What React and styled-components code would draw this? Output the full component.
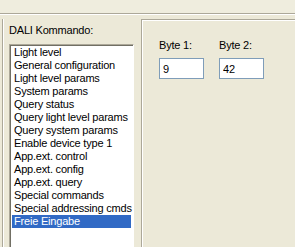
import styled, { createGlobalStyle } from "styled-components";

const GlobalStyle = createGlobalStyle`
  body {
    margin: 0;
    background: #ece9d8;
    font-family: "Liberation Sans", Arial, sans-serif;
    font-size: 11px;
    letter-spacing: -0.2px;
  }
`;

const items = [
  "Light level",
  "General configuration",
  "Light level params",
  "System params",
  "Query status",
  "Query light level params",
  "Query system params",
  "Enable device type 1",
  "App.ext. control",
  "App.ext. config",
  "App.ext. query",
  "Special commands",
  "Special addressing cmds",
  "Freie Eingabe",
];

const App = () => {
  return (
    <Window>
      <GlobalStyle />
      <TopBar />
      <Content>
        <LeftPane>
          <Label>DALI Kommando:</Label>
          <ListBox>
            {items.map((item) => (
              <Item key={item} selected={item === "Freie Eingabe"}>
                {item}
              </Item>
            ))}
          </ListBox>
        </LeftPane>
        <RightPane>
          <Field>
            <Label>Byte 1:</Label>
            <Input defaultValue="9" />
          </Field>
          <Field>
            <Label>Byte 2:</Label>
            <Input defaultValue="42" />
          </Field>
        </RightPane>
      </Content>
    </Window>
  );
};

export default App;

const Window = styled.div`
  width: 295px;
  height: 247px;
  overflow: hidden;
  background: #ece9d8;
  color: #000;
`;

const TopBar = styled.div`
  height: 13px;
  background: #efedde;
  border-bottom: 1px solid #aca899;
  box-shadow: 0 1px 0 #fff;
`;

const Content = styled.div`
  display: flex;
  padding-top: 5px;
  height: 240px;
`;

const LeftPane = styled.div`
  margin-left: 2px;
  width: 138px;
  border-left: 1px solid #aca899;
  box-shadow: inset 1px 0 0 #fff;
  padding: 5px 0 0 6px;
  box-sizing: border-box;
  display: flex;
  flex-direction: column;
  gap: 7px;
`;

const Label = styled.div`
  line-height: 13px;
  white-space: nowrap;
`;

const ListBox = styled.div`
  width: 125px;
  background: #fff;
  border: 1px solid;
  border-color: #aca899 #fff #fff #aca899;
  box-shadow: inset 1px 1px 0 #716f64;
  padding: 1px 2px 0 2px;
  box-sizing: border-box;
  flex: 1;
`;

const Item = styled.div`
  height: 13px;
  line-height: 13px;
  padding-left: 2px;
  white-space: nowrap;
  background: ${(p) => (p.selected ? "#316ac5" : "transparent")};
  color: ${(p) => (p.selected ? "#fff" : "#000")};
`;

const RightPane = styled.div`
  margin-left: 1px;
  flex: 1;
  border-top: 1px solid #aca899;
  border-left: 1px solid #aca899;
  box-shadow: inset 1px 1px 0 #fff;
  padding: 19px 0 0 17px;
  display: flex;
  gap: 15px;
  align-items: flex-start;
`;

const Field = styled.div`
  display: flex;
  flex-direction: column;
  gap: 6px;
`;

const Input = styled.input`
  width: 45px;
  height: 21px;
  box-sizing: border-box;
  border: 1px solid #7f9db9;
  padding: 0 3px;
  font: inherit;
  font-size: 11px;
  outline: none;
  background: #fff;
`;
